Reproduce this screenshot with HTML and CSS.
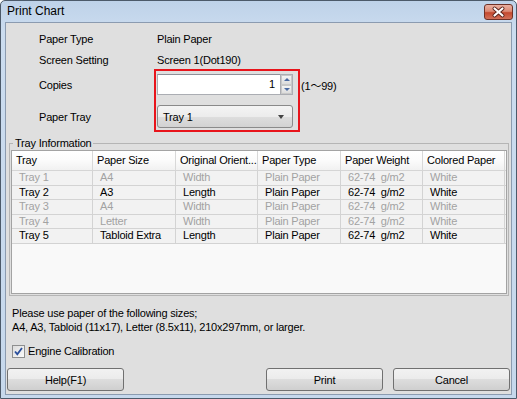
FILE: index.html
```html
<!DOCTYPE html>
<html lang="en">

<head>
    <meta charset="UTF-8">
    <meta name="viewport" content="width=device-width, initial-scale=1.0">
    <title>Print Chart</title>
    <link rel="stylesheet" href="styles.css">
</head>

<body>
    <div class="window">
        <div class="titlebar">
            <span class="title">Print Chart</span>
            <button class="close" aria-label="Close">
                <svg width="27" height="14" viewBox="0 0 27 14">
                    <path d="M9.5 3.5 L17.5 10.5 M17.5 3.5 L9.5 10.5" stroke="#5a2219" stroke-width="4" stroke-linecap="round" fill="none" />
                    <path d="M9.5 3.5 L17.5 10.5 M17.5 3.5 L9.5 10.5" stroke="#fff" stroke-width="2.2" stroke-linecap="round" fill="none" />
                </svg>
            </button>
        </div>

        <div class="client">
            <!-- settings -->
            <div class="form">
                <div class="row">
                    <span class="label">Paper Type</span>
                    <span class="value">Plain Paper</span>
                </div>
                <div class="row">
                    <span class="label">Screen Setting</span>
                    <span class="value">Screen 1(Dot190)</span>
                </div>
                <div class="row row-copies">
                    <span class="label">Copies</span>
                    <div class="spin">
                        <span class="spin-field">1</span>
                        <div class="spin-btns">
                            <span class="spin-up"></span>
                            <span class="spin-down"></span>
                        </div>
                    </div>
                    <span class="range">(1～99)</span>
                </div>
                <div class="row row-tray">
                    <span class="label">Paper Tray</span>
                    <div class="select">
                        <span>Tray 1</span>
                        <span class="select-arrow"></span>
                    </div>
                </div>
                <div class="mark"></div>
            </div>

            <!-- tray list -->
            <fieldset class="group">
                <legend>Tray Information</legend>
                <div class="list">
                    <div class="list-head">
                        <span>Tray</span>
                        <span>Paper Size</span>
                        <span>Original Orient...</span>
                        <span>Paper Type</span>
                        <span>Paper Weight</span>
                        <span>Colored Paper</span>
                    </div>
                    <div class="list-row off">
                        <span>Tray 1</span><span>A4</span><span>Width</span><span>Plain Paper</span><span>62-74&nbsp; g/m2</span><span>White</span>
                    </div>
                    <div class="list-row">
                        <span>Tray 2</span><span>A3</span><span>Length</span><span>Plain Paper</span><span>62-74&nbsp; g/m2</span><span>White</span>
                    </div>
                    <div class="list-row off">
                        <span>Tray 3</span><span>A4</span><span>Width</span><span>Plain Paper</span><span>62-74&nbsp; g/m2</span><span>White</span>
                    </div>
                    <div class="list-row off">
                        <span>Tray 4</span><span>Letter</span><span>Width</span><span>Plain Paper</span><span>62-74&nbsp; g/m2</span><span>White</span>
                    </div>
                    <div class="list-row">
                        <span>Tray 5</span><span>Tabloid Extra</span><span>Length</span><span>Plain Paper</span><span>62-74&nbsp; g/m2</span><span>White</span>
                    </div>
                </div>
            </fieldset>

            <p class="note">Please use paper of the following sizes;<br>A4, A3, Tabloid (11x17), Letter (8.5x11), 210x297mm, or larger.</p>

            <label class="check">
                <span class="check-box">
                    <svg width="11" height="11" viewBox="0 0 11 11">
                        <path d="M2 5.5 L4.3 8.2 L9 2" stroke="#2a4f9c" stroke-width="1.8" fill="none" />
                    </svg>
                </span>
                Engine Calibration
            </label>

            <div class="buttons">
                <button class="btn">Help(F1)</button>
                <span class="spacer"></span>
                <button class="btn">Print</button>
                <button class="btn">Cancel</button>
            </div>
        </div>
    </div>
</body>

</html>
```

FILE: styles.css
```css
* {
    margin: 0;
    padding: 0;
    box-sizing: border-box;
}

html,
body {
    height: 100%;
}

body {
    font-family: "Liberation Sans", "Noto Sans CJK JP", sans-serif;
    font-size: 11px;
    letter-spacing: -0.2px;
    color: #000;
    background: #fff;
}

/* window frame */
.window {
    width: 517px;
    height: 399px;
    display: flex;
    flex-direction: column;
    border: 1px solid #4c5a6a;
    border-radius: 5px 5px 0 0;
    background: linear-gradient(#bed2e9, #cbdcef 30px, #c6d8ec);
}

.titlebar {
    height: 21px;
    display: flex;
    align-items: flex-start;
    padding: 0 3px 0 6px;
}

.title {
    font-size: 12px;
    letter-spacing: 0;
    line-height: 21px;
}

.close {
    margin-left: auto;
    margin-top: 3px;
    width: 29px;
    height: 16px;
    border: 1px solid #6f3126;
    border-radius: 3px;
    background: linear-gradient(#eab0a1, #dc8a75 45%, #c4492f 55%, #d2715a);
    display: flex;
    align-items: center;
    justify-content: center;
}

.client {
    flex: 1;
    margin: 0 4px 3px;
    border: 1px solid #8b9bb0;
    background: #dfdfdf;
    display: flex;
    flex-direction: column;
}

/* settings block */
.form {
    position: relative;
    padding: 5px 0 0 33px;
}

.row {
    display: flex;
    align-items: center;
    height: 21px;
}

.label {
    width: 118px;
}

.row-copies {
    margin-top: 4px;
}

.row-tray {
    margin-top: 10px;
    height: 23px;
}

.spin {
    display: flex;
    height: 21px;
}

.spin-field {
    width: 123px;
    height: 21px;
    background: #fff;
    border: 1px solid #abadb3;
    border-top-color: #8e9199;
    border-right: none;
    text-align: right;
    padding-right: 5px;
    line-height: 19px;
}

.spin-btns {
    width: 13px;
    display: flex;
    flex-direction: column;
    border: 1px solid #abadb3;
    background: #fff;
}

.spin-up,
.spin-down {
    flex: 1;
    position: relative;
    background: linear-gradient(#f4f4f4, #dcdcdc);
    border: 1px solid #c8c8c8;
}

.spin-up::after,
.spin-down::after {
    content: "";
    position: absolute;
    left: 2px;
    top: 2px;
    border-left: 3px solid transparent;
    border-right: 3px solid transparent;
}

.spin-up::after {
    border-bottom: 3px solid #4b6aa2;
}

.spin-down::after {
    border-top: 3px solid #4b6aa2;
}

.range {
    margin-left: 8px;
}

.select {
    width: 136px;
    height: 23px;
    display: flex;
    align-items: center;
    padding-left: 5px;
    border: 1px solid #8a8a8a;
    border-radius: 3px;
    background: linear-gradient(#f4f4f4, #ececec 50%, #dedede 50%, #d2d2d2);
}

.select-arrow {
    margin-left: auto;
    margin-right: 8px;
    border-left: 3.5px solid transparent;
    border-right: 3.5px solid transparent;
    border-top: 4px solid #444;
}

/* red annotation frame */
.mark {
    position: absolute;
    left: 148px;
    top: 46px;
    width: 146px;
    height: 63px;
    border: 2px solid #e8141b;
}

/* tray information */
.group {
    margin: 9px 2px 0 3px;
    padding: 0 1px 1px;
    border: 1px solid #b5b5b5;
}

.group legend {
    margin-left: 2px;
    padding: 0 2px;
    line-height: 13px;
}

.list {
    height: 144px;
    border: 1px solid #a3a3a3;
    background: #f9f9f9;
}

.list-head,
.list-row {
    display: grid;
    grid-template-columns: 81px 83px 82px 83px 82px 82px;
}

.list-head {
    height: 20px;
    border-bottom: 1px solid #d5d5d5;
    background: linear-gradient(#fff, #fbfbfb 50%, #f1f1f1);
}

.list-head span {
    padding-left: 4px;
    line-height: 19px;
    border-right: 1px solid #d8d8d8;
    white-space: nowrap;
    overflow: hidden;
}

.list-row {
    height: 14.5px;
    border-bottom: 1px solid #d3d3d3;
    background: #f2f2f2;
}

.list-row span {
    padding-left: 7px;
    line-height: 13.5px;
    border-right: 1px solid #d3d3d3;
    white-space: nowrap;
}

.list-row.off {
    color: #a2a2a2;
}

.note {
    margin: 10px 0 0 6px;
    line-height: 14px;
}

.check {
    margin: 10px 0 0 6px;
    height: 14px;
    display: flex;
    align-items: center;
    gap: 3px;
}

.check-box {
    width: 13px;
    height: 13px;
    border: 1px solid #8e8f8f;
    background: linear-gradient(135deg, #dcdcdc, #fbfbfb);
    display: flex;
    align-items: center;
    justify-content: center;
}

.buttons {
    margin: 10px 1px 0 1px;
    display: flex;
    gap: 10px;
}

.spacer {
    flex: 1;
}

.btn {
    width: 117px;
    height: 23px;
    font: inherit;
    letter-spacing: inherit;
    color: #000;
    border: 1px solid #707070;
    border-radius: 3px;
    background: linear-gradient(#f2f2f2, #ebebeb 50%, #dddddd 50%, #cfcfcf);
}
```
